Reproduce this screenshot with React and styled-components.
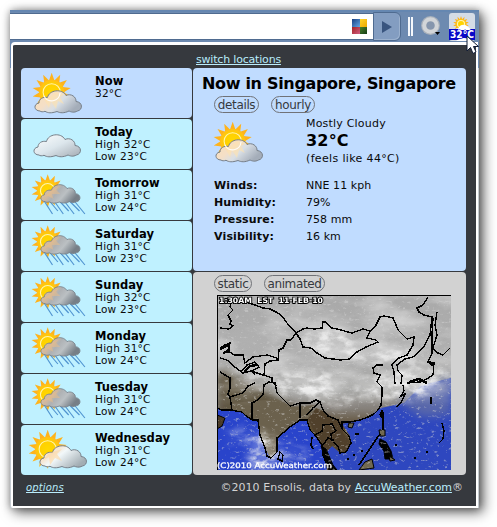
import React from "react";
import styled, { createGlobalStyle, css } from "styled-components";

const GlobalStyle = createGlobalStyle`
  * { box-sizing: border-box; }
  body { margin: 0; background: #fff; font-family: "DejaVu Sans", Verdana, sans-serif; }
  svg { display: block; }
`;

const Page = styled.div`
  width: 497px;
  height: 527px;
  padding: 10px;
  overflow: hidden;
`;

const Window = styled.div`
  position: relative;
  width: 469px;
  height: 498px;
  background: #c3c9cf;
  box-shadow: 4px 4px 12px rgba(0, 0, 0, 0.65), 0 0 7px rgba(0, 0, 0, 0.3);
`;

const Toolbar = styled.div`
  display: flex;
  align-items: center;
  height: 58px;
  padding: 3px 0 28px;
  margin-bottom: -26px;
  background: #6d8ab0;
  box-shadow: inset 0 2px 0 #6587b1;
`;

const AddressBox = styled.div`
  display: flex;
  align-items: center;
  justify-content: flex-end;
  width: 363px;
  height: 27px;
  padding-right: 6px;
  background: #fff;
  border-top: 1px solid #4f6b90;
  border-bottom: 1px solid #4f6b90;
`;

const Swatches = styled.div`
  display: grid;
  grid-template-columns: 8px 7px;
  grid-template-rows: 8px 7px;
`;

const Swatch = styled.i`
  background: linear-gradient(135deg, ${(p) => p.$from}, ${(p) => p.$to});
`;

const GoButton = styled.div`
  display: flex;
  align-items: center;
  justify-content: center;
  width: 28px;
  height: 29px;
  background: #839dc1;
  border: 1px solid #4f6b90;
  border-radius: 0 6px 6px 0;
  box-shadow: inset -1px -1px 0 #9bb1ce;
`;

const Divider = styled.div`
  width: 5px;
  height: 19px;
  margin: 0 8px 0 7px;
  border: solid #f5f8fc;
  border-width: 0 2px;
`;

const RingSlot = styled.div`
  width: 21px;
  height: 22px;
`;

const Extension = styled.div`
  width: 26px;
  height: 28px;
  margin-left: 7px;
`;

const Popup = styled.div`
  width: 467px;
  height: 466px;
  margin-left: 1px;
  display: flex;
  flex-direction: column;
  background: #36393e;
  border: solid #fff;
  border-width: 3px 2px 2px;
  border-radius: 4px 0 0 2px;
  padding: 0 10px 0 8px;
`;

const Top = styled.div`
  height: 23px;
  padding: 6px 0 0 175px;
  font-size: 11px;
  line-height: 17px;
`;

const Link = styled.a`
  color: #b9ecfb;
  text-decoration: underline;
  text-underline-offset: 1px;
  text-decoration-skip-ink: none;
  white-space: nowrap;
  letter-spacing: ${(p) => p.$track || 0}px;
  ${(p) => p.$italic && css`font-style: italic; font-size: 10px;`}
`;

const Columns = styled.div`
  display: flex;
  gap: 1px;
`;

const Days = styled.div`
  display: flex;
  flex-direction: column;
  gap: 1px;
  width: 171px;
`;

const DayCard = styled.div`
  display: flex;
  height: 50px;
  border-radius: 4px;
  background: ${(p) => (p.$active ? "#c0dcff" : "#bff1ff")};
`;

const DayText = styled.div`
  padding: 7px 0 0 4px;
  color: #0a0a0a;
  font-size: 10.5px;
  line-height: 12px;
  letter-spacing: 0.25px;
  white-space: nowrap;
`;

const DayName = styled.div`
  font-size: 11.5px;
  font-weight: bold;
  letter-spacing: 0.08px;
  color: #000;
`;

const Main = styled.div`
  display: flex;
  flex-direction: column;
  gap: 1px;
  width: 273px;
`;

const Panel = styled.section`
  height: 203px;
  border-radius: 4px;
  background: ${(p) => p.$bg};
`;

const Title = styled.h1`
  margin: 0;
  height: 28px;
  padding: 4px 0 0 9px;
  font-size: 16px;
  line-height: 23px;
  letter-spacing: -0.32px;
  color: #000;
  white-space: nowrap;
`;

const Pills = styled.div`
  display: flex;
  gap: 12px;
  padding: ${(p) => p.$top || 0}px 0 0 21px;
`;

const Pill = styled.button`
  width: ${(p) => p.$w}px;
  height: 17px;
  padding: 0;
  border: 1px solid #707277;
  border-radius: 9px;
  background: transparent;
  color: #36393e;
  font: 12px/16px "DejaVu Sans", Verdana, sans-serif;
  letter-spacing: -0.35px;
  white-space: nowrap;
`;

const Current = styled.div`
  display: flex;
  height: 62px;
`;

const CurrentIcon = styled.div`
  width: 113px;
  padding: 4px 0 0 9px;
`;

const CurrentText = styled.div`
  padding-top: 3px;
  font-size: 11px;
  line-height: 15px;
  letter-spacing: 0.2px;
  color: #0a0a0a;
  white-space: nowrap;
`;

const Temp = styled.div`
  font-size: 16px;
  line-height: 19px;
  margin-bottom: 1px;
  font-weight: bold;
  color: #000;
`;

const FeelsLike = styled.div`
  letter-spacing: 0.35px;
`;

const Facts = styled.dl`
  display: grid;
  grid-template-columns: 92px 1fr;
  grid-auto-rows: 17px;
  margin: 0;
  padding: 2px 0 0 21px;
  font-size: 11px;
  line-height: 17px;
  color: #0a0a0a;
`;

const Label = styled.dt`
  font-weight: bold;
  letter-spacing: 0.15px;
`;

const Value = styled.dd`
  margin: 0;
  letter-spacing: 0.05px;
`;

const MapFrame = styled.div`
  padding: 3px 0 0 24px;
`;

const Footer = styled.footer`
  display: flex;
  justify-content: space-between;
  padding: 5px 3px 0 5px;
  font-size: 11px;
  line-height: 15px;
  color: #d3d3d3;
  white-space: nowrap;
`;

const Credit = styled.span`
  letter-spacing: 0.06px;
`;

const Pointer = styled.div`
  position: absolute;
  left: 456px;
  top: 25px;
`;

const sunPoints = (cx, cy, outer, inner, n = 14) =>
  Array.from({ length: n * 2 }, (_, i) => {
    const a = (i * Math.PI) / n - Math.PI / 2;
    const r = i % 2 ? inner : outer;
    return `${(cx + r * Math.cos(a)).toFixed(1)},${(cy + r * Math.sin(a)).toFixed(1)}`;
  }).join(" ");

const CLOUD =
  "M19 43C13 43 12 36 18 35C18 31 22 28.5 26.5 29.5C28 22 41 20 45 27.5C50 25 55.5 29 55 33.5C62 34 62 42 56.5 43C53 45 50 44 48 43C43 45.5 39 45 36 43.5C30 45.5 27 45 24 43.3C22 44 20 44 19 43Z";

function Defs() {
  return (
    <svg width="0" height="0">
      <defs>
        <radialGradient id="disc">
          <stop offset="0" stopColor="#ffd800" />
          <stop offset="0.7" stopColor="#ffcf00" />
          <stop offset="1" stopColor="#ffbe1c" />
        </radialGradient>
        <linearGradient id="light" x1="0" y1="0" x2="1" y2="1">
          <stop offset="0" stopColor="#ffffff" />
          <stop offset="0.5" stopColor="#dce6ec" />
          <stop offset="1" stopColor="#a3aab2" />
        </linearGradient>
        <linearGradient id="warm" x1="0" y1="0" x2="1" y2="0.5">
          <stop offset="0" stopColor="#f6dfbc" />
          <stop offset="0.42" stopColor="#f5dfc6" />
          <stop offset="0.64" stopColor="#d9dfe5" />
          <stop offset="1" stopColor="#a4adb9" />
        </linearGradient>
        <linearGradient id="clear" x1="0" y1="0" x2="1" y2="0.6">
          <stop offset="0" stopColor="#fae6c8" />
          <stop offset="0.35" stopColor="#f6e6d2" />
          <stop offset="0.5" stopColor="#f2f8fa" />
          <stop offset="1" stopColor="#a2adb3" />
        </linearGradient>
        <linearGradient id="dark" x1="0" y1="0" x2="1" y2="0.4">
          <stop offset="0" stopColor="#e2c5a0" />
          <stop offset="0.38" stopColor="#cdb7a0" />
          <stop offset="0.5" stopColor="#aeb1b4" />
          <stop offset="0.7" stopColor="#bbc0c3" />
          <stop offset="1" stopColor="#777f87" />
        </linearGradient>
      </defs>
    </svg>
  );
}

function Sun({ cx, cy, r }) {
  return (
    <g>
      <polygon points={sunPoints(cx, cy, r, r * 0.62)} fill="#ffb31c" />
      <circle cx={cx} cy={cy} r={r * 0.65} fill="url(#disc)" />
      <circle cx={cx} cy={cy} r={r * 0.44} fill="none" stroke="#fff3b0" strokeWidth="1.1" />
    </g>
  );
}

const SKY = {
  now: { sun: [30.7, 24.3, 19.5], cloud: "", fill: "url(#warm)" },
  cloudy: { cloud: "translate(-1 -7)", fill: "url(#light)" },
  rain: { sun: [26.7, 20.7, 16.5], cloud: "translate(8.2 -4.5) scale(.84)", fill: "url(#dark)", rain: true },
  fair: { sun: [26.7, 24.3, 19.5], cloud: "translate(5 -2)", fill: "url(#clear)" },
};

function WeatherIcon({ kind }) {
  const s = SKY[kind];
  return (
    <svg width="70" height="50" viewBox="0 0 70 50">
      {s.sun && <Sun cx={s.sun[0]} cy={s.sun[1]} r={s.sun[2]} />}
      {s.rain && (
        <g stroke="#4f93d0" strokeWidth="1.15">
          {[0, 1, 2, 3, 4, 5, 6].map((i) => (
            <line key={i} x1={22.5 + i * 5} y1={30} x2={31.5 + i * 5.4} y2={i % 2 ? 41 : 44} />
          ))}
        </g>
      )}
      <g transform={s.cloud}>
        <path d={CLOUD} fill={s.fill} stroke="#777f88" strokeWidth="1" />
        {kind === "now" && (
          <>
            <polygon points="23,31 28,40 30,33 35,41 37,33 43,36 39,29 44,26 35,24 29,29" fill="#ffe2ad" opacity=".6" />
            <path d="M23 28a8.4 8.4 0 0 0 16-3" fill="none" stroke="#fff" strokeWidth="1.2" opacity=".9" />
          </>
        )}
        {kind === "fair" && <polygon points="17,37 23,34 24,42 29,35 36,38 31,31 36,26 27,29 23,30" fill="#ffd7a0" opacity=".6" />}
        {kind === "rain" && <polygon points="16,39 22,36 29,40 27,34 37,34 32,29 35,25 27,29" fill="#efbf86" opacity=".45" />}
      </g>
    </svg>
  );
}

const BORDERS = [
  "M14 8L13 12L16 15L11 20L14 26L13 29L16 31L12 34L3 33",
  "M16 8L25 6L38 10L46 13L53 14L61 18L66 22L70 28L79 38L83 44L86 52L94 53L100 58L108 63L116 64L123 65L133 64L140 57L149 52L161 47L159 45L150 43L153 36L158 32L163 22L167 21L176 23L179 30L181 35L190 44L197 42L196 50L190 60L182 63L175 70L177 77L178 89",
  "M79 38L86 34L90 33L97 34L105 33L106 27L109 27L115 33L120 34L135 38L146 34L153 36",
  "M79 38L74 45L70 45L66 53L62 55L61 65L53 66L48 69L47 80L55 83L55 87L60 91",
  "M3 53L8 50L13 48L11 55L6 58L13 57L17 60L26 60L28 68L36 62L50 60L60 63M3 63L10 65L18 72L26 78L34 76L46 80",
  "M25 76L30 70L38 67L42 72L35 76L38 80M3 77L13 83L13 93L11 99L13 102L15 115",
  "M211 2L206 10L200 13L202 17L207 20L215 22L213 40L206 53L196 62L188 64L180 70L181 76L185 80L184 89",
  "M220 17L218 30L220 40L216 53L221 58L226 60L233 53M216 23L215 40L215 58L211 67L217 68L216 80L210 84L203 87L190 88",
  "M166 70L160 70L156 73L157 78L163 80L160 87L165 92L165 100L164 110L161 115L157 119L151 122L143 125L133 127L125 127L125 134L132 141L134 148L129 157L123 158L121 151L116 147",
  "M0 113L5 115L13 115L25 117L29 121L35 125L41 125L43 140L48 153L50 161L54 163L60 157L60 143L66 138L73 132L83 125L90 125L93 135L98 140L105 150L106 160L110 170",
  "M13 102L26 98L31 91L38 88M35 125L35 108L39 106L46 100L47 90L52 87L58 88L60 98L73 111L83 108L93 108L99 105L103 107L106 115L111 121L121 125L125 134",
  "M83 108L83 123M90 120L96 113L103 107M98 140L105 136L106 130L115 129L119 136L114 139L115 146M106 150L111 143L117 145",
  "M63 157l3 3l-1 6l-4-2z M95 142l-1 8l2 4 M165 115l-2 5l2 2z M186 90L187 96L184 101L188 99L185 106L180 112 M214 102v7 M225 128l2 8l-1 8l-4 4 M166 117v18",
];

const cloudBands = [
  [60, 84, 45, 8, 0.35],
  [92, 90, 34, 14, 0.65],
  [120, 102, 24, 8, 0.4],
  [178, 92, 38, 12, 0.75],
  [205, 80, 28, 10, 0.6],
  [160, 60, 45, 9, 0.5],
  [110, 46, 26, 14, 0.55],
  [46, 158, 13, 18, 0.8],
  [30, 142, 20, 8, 0.2],
  [74, 160, 16, 10, 0.2],
];

function SatelliteMap() {
  return (
    <svg width="234" height="175" viewBox="0 0 234 175">
      <defs>
        <linearGradient id="land" x1="0" y1="0" x2="0" y2="1">
          <stop offset="0" stopColor="#a9a9a9" />
          <stop offset="0.35" stopColor="#b2b2b2" />
          <stop offset="0.55" stopColor="#9c9c9a" />
          <stop offset="0.65" stopColor="#85807a" />
          <stop offset="0.75" stopColor="#5c4c32" />
        </linearGradient>
        <filter id="soft" x="-50%" y="-50%" width="200%" height="200%">
          <feGaussianBlur stdDeviation="5" />
        </filter>
        <filter id="wisps" x="0" y="0" width="100%" height="100%">
          <feTurbulence type="fractalNoise" baseFrequency="0.07 0.12" numOctaves="5" seed="12" />
          <feColorMatrix values="0 0 0 0 .93  0 0 0 0 .93  0 0 0 0 .93  3 0 0 0 -1.2" />
        </filter>
        <filter id="haze" x="0" y="0" width="100%" height="100%">
          <feTurbulence type="fractalNoise" baseFrequency="0.02 0.05" numOctaves="5" seed="31" />
          <feColorMatrix values="0 0 0 0 .9  0 0 0 0 .9  0 0 0 0 .9  2 0 0 0 -.8" />
        </filter>
        <filter id="shade" x="0" y="0" width="100%" height="100%">
          <feTurbulence type="fractalNoise" baseFrequency="0.03 0.06" numOctaves="5" seed="23" />
          <feColorMatrix values="0 0 0 0 .4  0 0 0 0 .4  0 0 0 0 .4  0 2 0 0 -.8" />
        </filter>
        <filter id="fleck" x="0" y="0" width="100%" height="100%">
          <feTurbulence type="fractalNoise" baseFrequency="0.22 0.34" numOctaves="4" seed="4" />
          <feColorMatrix values="0 0 0 0 .66  0 0 0 0 .66  0 0 0 0 .66  0 6 0 0 -3.7" />
        </filter>
        <linearGradient id="fade" x1="0" y1="0" x2="0" y2="1">
          <stop offset="0.5" stopColor="#fff" />
          <stop offset="0.64" stopColor="#000" />
        </linearGradient>
        <mask id="north">
          <rect width="234" height="175" fill="url(#fade)" />
        </mask>
        <mask id="bands">
          <g filter="url(#soft)">
            {cloudBands.map(([x, y, rx, ry, o], i) => (
              <ellipse key={i} cx={x} cy={y} rx={rx} ry={ry} fill="#fff" opacity={Math.min(1, o + 0.2)} />
            ))}
          </g>
        </mask>
      </defs>
      <rect width="234" height="175" fill="url(#land)" />
      <path d="M0 74Q20 78 28 88Q55 97 60 103L80 114L100 116L90 130L41 132L25 122L0 118Z" fill="#5f5541" filter="url(#soft)" />
      <path d="M15 108L60 104L75 112L98 110L90 125L74 132L60 143L60 157L54 163L48 153L43 140L41 125L25 117L15 115Z" fill="#6b614d" />
      <path d="M0 114L13 115L25 117L35 125L41 126L43 140L48 153L53 163L60 157L60 143L73 132L83 125L90 125L93 135L98 140L105 150L110 175L0 175Z" fill="#2944cb" />
      <path d="M234 83L205 90L187 108L164 113L151 122L133 127L125 129L133 141L134 148L128 157L122 157L115 151L108 158L112 175L234 175Z" fill="#2e47bf" />
      <path d="M180 106L234 80V120L205 122Z" fill="#6470a6" filter="url(#soft)" opacity=".8" />
      <path d="M0 120L8 123L5 131L0 134Z" fill="#4b3c28" stroke="#000" />
      <path d="M99 113L106 116L125 128L126 138L133 147L129 157L122 156L116 150L108 158L98 139L91 124Z" fill="#50402b" />
      <g fill="#716950" stroke="#000">
        <path d="M132 128l5 0l-2 5l-4-1z" />
        <path d="M162 135l6 0l0 6l-5 0z" />
        <path d="M163 144l6 3l5 9l2 8l-8 0l-1-8l-5-7z" fill="#000" />
        <path d="M142 175l6-8l7-3l2 9z" />
        <path d="M172 161l6 4l-5 1z" />
        <path d="M104 151l5 3l7 16l4 5l-8 0z" fill="#000" />
      </g>
      <g mask="url(#north)">
        <rect width="234" height="175" filter="url(#shade)" opacity=".35" />
        <rect width="234" height="175" filter="url(#haze)" opacity=".55" />
      </g>
      <g filter="url(#soft)" fill="#fff">
        {cloudBands.map(([x, y, rx, ry, o], i) => (
          <ellipse key={i} cx={x} cy={y} rx={rx} ry={ry} opacity={o * 0.35} />
        ))}
      </g>
      <g mask="url(#bands)">
        <rect width="234" height="175" filter="url(#wisps)" />
      </g>
      <rect width="234" height="175" filter="url(#fleck)" opacity=".45" />
      <g fill="none" stroke="#000" strokeWidth="1.4" shapeRendering="crispEdges">
        {BORDERS.map((d, i) => (
          <path key={i} d={d} />
        ))}
        <path d="M3 54L12 50L12 56L6 58" strokeWidth="2.5" />
        <path d="M27 77L33 71L40 70M192 87l10 -3l8 4M211 66l6 5" strokeWidth="2.5" />
        <path d="M163 139L158 146L150 158L142 170" strokeWidth="1.6" />
        <path d="M136 160h2M144 156h2M138 139h4M197 163h2M178 150h2M209 157h2M130 164h2" strokeWidth="2" />
      </g>
      <path d="M0 .5H234M.5 0V175" stroke="#000" />
      <g fontFamily="'DejaVu Sans', sans-serif" fill="#fff">
        <text
          x="2"
          y="7.5"
          fontSize="7.5"
          fontWeight="bold"
          wordSpacing="2.5"
          textLength="104"
          lengthAdjust="spacingAndGlyphs"
          stroke="#000"
          strokeWidth="1.8"
          paintOrder="stroke"
        >
          1:30AM EST 11-FEB-10
        </text>
        <text x="0" y="173" fontSize="7.5" textLength="115" lengthAdjust="spacingAndGlyphs" stroke="#fff" strokeWidth=".25">
          (C)2010 AccuWeather.com
        </text>
      </g>
    </svg>
  );
}

function RingIcon() {
  return (
    <svg width="21" height="22" viewBox="0 0 21 22">
      <circle cx="9.5" cy="9.5" r="9.4" fill="#a9b1bb" />
      <circle cx="9.5" cy="9.5" r="6.3" fill="none" stroke="#d2d5d8" strokeWidth="4" />
      <circle cx="9.5" cy="9.5" r="4" fill="#8696ad" />
      <path d="M14 16h5l-2.5 3z" fill="#000" />
    </svg>
  );
}

function BadgeIcon() {
  return (
    <svg width="26" height="28" viewBox="0 0 26 28">
      <rect width="26" height="28" rx="3" fill="#d5dce6" />
      <Sun cx={12} cy={11} r={8} />
      <path d="M6 18c0-3 3-3 4-3c1-4 7-4 8-1c4 0 4 4 4 5H6z" fill="#edf0f4" />
      <rect y="16" width="26" height="11" fill="#0808c8" />
      <path d="M9 17c1-4 3-5 6-5s5 3 7 5z" fill="#fff" />
      <path d="M7 28c4-4 12-4 16 0z" fill="#fff" />
      <text
        x="1"
        y="25"
        fontFamily="'DejaVu Sans', sans-serif"
        fontSize="11"
        fontWeight="bold"
        fill="#fff"
        stroke="#0808c8"
        strokeWidth="1"
        paintOrder="stroke"
        textLength="24"
        lengthAdjust="spacingAndGlyphs"
      >
        32°C
      </text>
    </svg>
  );
}

const DAYS = [
  { name: "Now", lines: ["32°C"], icon: "now" },
  { name: "Today", lines: ["High 32°C", "Low 23°C"], icon: "cloudy" },
  { name: "Tomorrow", lines: ["High 31°C", "Low 24°C"], icon: "rain" },
  { name: "Saturday", lines: ["High 31°C", "Low 23°C"], icon: "rain" },
  { name: "Sunday", lines: ["High 32°C", "Low 23°C"], icon: "rain" },
  { name: "Monday", lines: ["High 31°C", "Low 24°C"], icon: "rain" },
  { name: "Tuesday", lines: ["High 31°C", "Low 24°C"], icon: "rain" },
  { name: "Wednesday", lines: ["High 31°C", "Low 24°C"], icon: "fair" },
];

const FACTS = [
  ["Winds:", "NNE 11 kph"],
  ["Humidity:", "79%"],
  ["Pressure:", "758 mm"],
  ["Visibility:", "16 km"],
];

export default function App() {
  return (
    <Page>
      <GlobalStyle />
      <Window>
        <Toolbar>
          <AddressBox>
            <Swatches>
              <Swatch $from="#183f82" $to="#62a7e5" />
              <Swatch $from="#ffd52c" $to="#eda900" />
              <Swatch $from="#a52222" $to="#cf5c80" />
              <Swatch $from="#49812a" $to="#153c16" />
            </Swatches>
          </AddressBox>
          <GoButton>
            <svg width="10" height="12" viewBox="0 0 10 12">
              <path d="M0 0L10 6L0 12Z" fill="#39557f" />
            </svg>
          </GoButton>
          <Divider />
          <RingSlot>
            <RingIcon />
          </RingSlot>
          <Extension>
            <BadgeIcon />
          </Extension>
        </Toolbar>
        <Popup>
          <Top>
            <Link $track={-0.19}>switch locations</Link>
          </Top>
          <Columns>
            <Days>
              {DAYS.map((d) => (
                <DayCard key={d.name} $active={d.name === "Now"}>
                  <WeatherIcon kind={d.icon} />
                  <DayText>
                    <DayName>{d.name}</DayName>
                    {d.lines.map((l) => (
                      <div key={l}>{l}</div>
                    ))}
                  </DayText>
                </DayCard>
              ))}
            </Days>
            <Main>
              <Panel $bg="#c0dcff">
                <Title>Now in Singapore, Singapore</Title>
                <Pills>
                  <Pill $w={45}>details</Pill>
                  <Pill $w={44}>hourly</Pill>
                </Pills>
                <Current>
                  <CurrentIcon>
                    <WeatherIcon kind="now" />
                  </CurrentIcon>
                  <CurrentText>
                    <div>Mostly Cloudy</div>
                    <Temp>32°C</Temp>
                    <FeelsLike>(feels like 44°C)</FeelsLike>
                  </CurrentText>
                </Current>
                <Facts>
                  {FACTS.map(([k, v]) => (
                    <React.Fragment key={k}>
                      <Label>{k}</Label>
                      <Value>{v}</Value>
                    </React.Fragment>
                  ))}
                </Facts>
              </Panel>
              <Panel $bg="#d2d2d2">
                <Pills $top={3}>
                  <Pill $w={38}>static</Pill>
                  <Pill $w={61}>animated</Pill>
                </Pills>
                <MapFrame>
                  <SatelliteMap />
                </MapFrame>
              </Panel>
            </Main>
          </Columns>
          <Footer>
            <Link $italic $track={0.15}>options</Link>
            <Credit>
              ©2010 Ensolis, data by <Link $track={-0.1}>AccuWeather.com</Link>®
            </Credit>
          </Footer>
        </Popup>
        <Pointer>
          <svg width="14" height="20" viewBox="0 0 14 20">
            <path d="M1 1V16L4.5 12.5L7 18.5L10 17L7.5 11.5H12.5Z" fill="#fff" stroke="#111c35" />
          </svg>
        </Pointer>
      </Window>
      <Defs />
    </Page>
  );
}
